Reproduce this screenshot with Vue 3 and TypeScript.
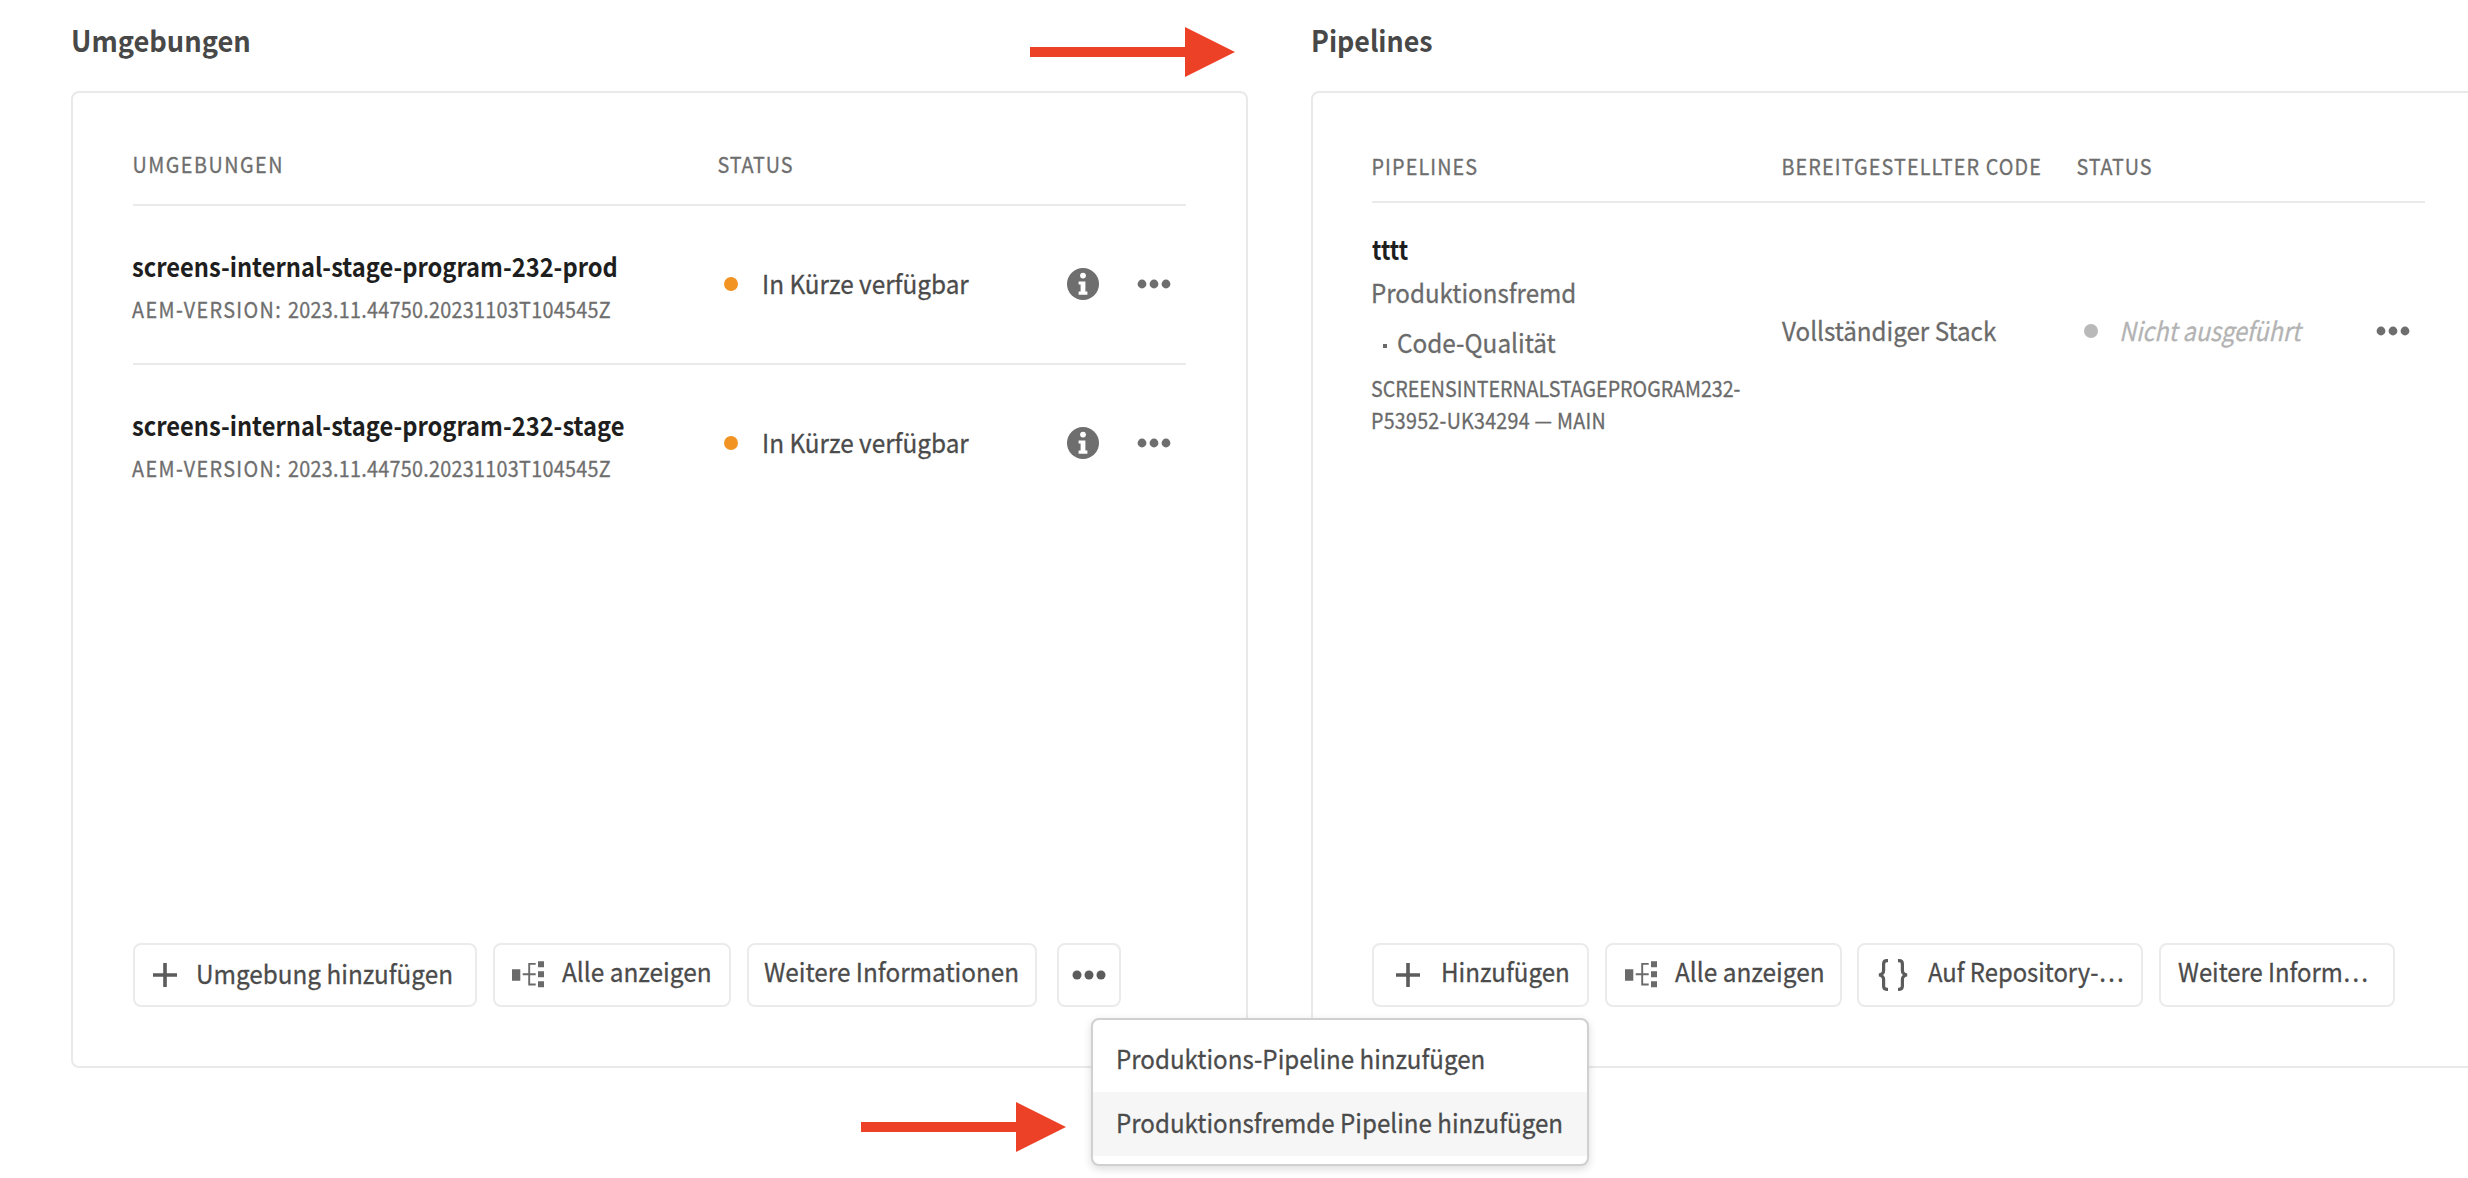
<script setup lang="ts">
import { ref } from 'vue'

interface Environment {
  name: string
  version: string
  status: string
}

const environments: Environment[] = [
  { name: 'screens-internal-stage-program-232-prod', version: '2023.11.44750.20231103T104545Z', status: 'In Kürze verfügbar' },
  { name: 'screens-internal-stage-program-232-stage', version: '2023.11.44750.20231103T104545Z', status: 'In Kürze verfügbar' },
]

const menuItems = ['Produktions-Pipeline hinzufügen', 'Produktionsfremde Pipeline hinzufügen']
const activeItem = ref(1)
</script>

<template>
  <main class="page">
    <div class="columns">
      <section class="column environments">
        <h2>Umgebungen</h2>
        <div class="card">
          <div class="table-head">
            <div class="col-name"><span class="caption wide">Umgebungen</span></div>
            <span class="caption tight">Status</span>
          </div>
          <div v-for="env in environments" :key="env.name" class="row">
            <div class="col-name env-name">
              <p class="name">{{ env.name }}</p>
              <p class="meta">AEM-Version: <span class="version">{{ env.version }}</span></p>
            </div>
            <div class="col-status">
              <i class="dot pending"></i>
              <span class="text">{{ env.status }}</span>
            </div>
            <svg class="info" width="32" height="32" viewBox="0 0 32 32">
              <circle cx="16" cy="16" r="16" fill="#6e6e6e" />
              <circle cx="16" cy="7.6" r="2.9" fill="#fff" />
              <path d="M11.6 13.4h6.8v10.2h2v3.2h-8.8v-3.2h2v-7h-2z" fill="#fff" />
            </svg>
            <svg class="more" width="34" height="10" viewBox="0 0 34 10" fill="#6e6e6e">
              <circle cx="5" cy="5" r="4.4" /><circle cx="17" cy="5" r="4.4" /><circle cx="29" cy="5" r="4.4" />
            </svg>
          </div>
          <footer class="actions">
            <button class="b-env">
              <svg width="24" height="24" viewBox="0 0 24 24"><path d="M12 0v24M0 12h24" stroke="#5c5c5c" stroke-width="3.6" /></svg>
              <span class="label low">Umgebung hinzufügen</span>
            </button>
            <button class="b-all">
              <svg width="32" height="27" viewBox="0 0 32 27">
                <path d="M0 8.3h8.3v11.4H0zM26 .2h6v6h-6zM26 10.2h6v6h-6zM26 20.3h6v6h-6z" fill="#6a6a6a" />
                <path d="M10.7 13.2h13M23.7 2.9h-6.5v20.6h6.5" fill="none" stroke="#6a6a6a" stroke-width="1.9" />
              </svg>
              <span class="label">Alle anzeigen</span>
            </button>
            <button class="b-more"><span class="label">Weitere Informationen</span></button>
            <button class="b-dots">
              <svg width="34" height="10" viewBox="0 0 34 10" fill="#5c5c5c">
                <circle cx="5" cy="5" r="4.5" /><circle cx="17" cy="5" r="4.5" /><circle cx="29" cy="5" r="4.5" />
              </svg>
            </button>
          </footer>
        </div>
      </section>

      <section class="column pipelines">
        <h2>Pipelines</h2>
        <div class="card">
          <div class="table-head">
            <div class="col-pipeline"><span class="caption">Pipelines</span></div>
            <div class="col-code"><span class="caption">Bereitgestellter Code</span></div>
            <span class="caption tight">Status</span>
          </div>
          <div class="pipeline-row">
            <div class="col-pipeline">
              <p class="name short">tttt</p>
              <p class="text soft kind">Produktionsfremd</p>
              <div class="sub"><i class="bullet"></i><span class="text soft">Code-Qualität</span></div>
              <p class="repo">SCREENSINTERNALSTAGEPROGRAM232-<br /><span class="branch">P53952-UK34294 — MAIN</span></p>
            </div>
            <div class="col-code"><span class="text soft">Vollständiger Stack</span></div>
            <div class="col-run">
              <i class="dot idle"></i>
              <span class="text never">Nicht ausgeführt</span>
            </div>
            <svg class="more" width="34" height="10" viewBox="0 0 34 10" fill="#6e6e6e">
              <circle cx="5" cy="5" r="4.4" /><circle cx="17" cy="5" r="4.4" /><circle cx="29" cy="5" r="4.4" />
            </svg>
          </div>
          <footer class="actions">
            <button class="p-add">
              <svg width="24" height="24" viewBox="0 0 24 24"><path d="M12 0v24M0 12h24" stroke="#5c5c5c" stroke-width="3.6" /></svg>
              <span class="label">Hinzufügen</span>
            </button>
            <button class="p-all">
              <svg width="32" height="27" viewBox="0 0 32 27">
                <path d="M0 8.3h8.3v11.4H0zM26 .2h6v6h-6zM26 10.2h6v6h-6zM26 20.3h6v6h-6z" fill="#6a6a6a" />
                <path d="M10.7 13.2h13M23.7 2.9h-6.5v20.6h6.5" fill="none" stroke="#6a6a6a" stroke-width="1.9" />
              </svg>
              <span class="label">Alle anzeigen</span>
            </button>
            <button class="p-repo">
              <svg width="30" height="32" viewBox="0 0 30 32" fill="none" stroke="#5c5c5c" stroke-width="3.2">
                <path d="M10 1.7H8.8Q5.6 1.7 5.6 5v6.6Q5.6 15.4 1 16q4.6 .6 4.6 4.4V27q0 3.3 3.2 3.3H10" />
                <path d="M20 1.7h1.2q3.2 0 3.2 3.3v6.6q0 3.8 4.6 4.4-4.6 .6-4.6 4.4V27q0 3.3-3.2 3.3H20" />
              </svg>
              <span class="label cut">Auf Repository-…</span>
            </button>
            <button class="p-more"><span class="label cut">Weitere Inform…</span></button>
          </footer>
        </div>
      </section>
    </div>

    <ul class="menu">
      <li v-for="(item, i) in menuItems" :key="item" :class="{ active: i === activeItem }" @mouseenter="activeItem = i">
        <span class="label">{{ item }}</span>
      </li>
    </ul>

    <svg class="arrow arrow-top" width="205" height="50" viewBox="0 0 205 50"><path d="M0 20h155V0l50 25-50 25V30H0z" fill="#ed4127" /></svg>
    <svg class="arrow arrow-bottom" width="205" height="50" viewBox="0 0 205 50"><path d="M0 20h155V0l50 25-50 25V30H0z" fill="#ed4127" /></svg>
  </main>
</template>

<style>
body {
  margin: 0;
  background: #fff;
}
</style>

<style scoped>
* {
  box-sizing: border-box;
}
.page {
  position: relative;
  width: 2468px;
  height: 1178px;
  overflow: hidden;
  background: #fff;
  font-family: 'Noto Sans CJK SC', 'Open Sans', sans-serif;
  font-size: 26px;
  color: #4b4b4b;
}
.page h2,
.page p,
.page ul {
  margin: 0;
  padding: 0;
}
.columns {
  display: flex;
  gap: 63px;
  padding: 20px 0 0 71px;
}
.column {
  flex: none;
}
.environments {
  width: 1177px;
}
.pipelines {
  width: 1240px;
}
/* The face is drawn slightly condensed throughout. */
h2,
.caption,
.meta,
.name,
.text,
.repo,
.label {
  display: inline-block;
  transform: translate(-1px, -1px) scaleX(var(--fit, 0.936));
  transform-origin: 0 50%;
  white-space: nowrap;
}
.text,
.label,
.caption,
.meta,
.repo {
  -webkit-text-stroke: 0.3px currentColor;
}
h2 {
  --fit: 0.94;
  display: block;
  transform: translateY(-1px) scaleX(var(--fit));
  font-size: 29px;
  font-weight: 700;
  line-height: 40px;
  color: #484848;
}
.pipelines h2 {
  --fit: 0.925;
}
.card {
  display: flex;
  flex-direction: column;
  height: 977px;
  margin-top: 31px;
  padding: 0 60px 59px;
  border: 2px solid #e9e9e9;
  border-radius: 8px;
}
.pipelines .card {
  padding: 0 0 59px 59px;
}
.table-head {
  display: flex;
  flex: none;
  height: 113px;
  padding-top: 56px;
  border-bottom: 2px solid #eaeaea;
}
.pipelines .table-head {
  width: 1053px;
  height: 110px;
  padding-top: 58px;
}
.caption,
.meta {
  --fit: 0.92;
  font-size: 21.5px;
  line-height: 30px;
  letter-spacing: 1.2px;
  text-transform: uppercase;
  color: #6e6e6e;
}
.table-head .caption {
  height: 30px;
  transform: translate(-0.5px, -0.5px) scaleX(var(--fit));
  vertical-align: top;
}
.table-head .wide {
  letter-spacing: 1.6px;
}
.table-head .tight {
  letter-spacing: 0.9px;
}
.page .meta {
  letter-spacing: 1.5px;
}
.version {
  letter-spacing: 0.3px;
}
.col-name {
  flex: none;
  width: 585px;
}
.row {
  display: flex;
  align-items: center;
  flex: none;
  height: 159px;
  padding-bottom: 2px;
  border-bottom: 2px solid #eaeaea;
}
.row:nth-child(3) {
  border-bottom-color: transparent;
}
.env-name {
  padding-top: 6px;
}
.name {
  --fit: 0.911;
  display: block;
  font-weight: 700;
  line-height: 38px;
  color: #1e1e1e;
}
.short {
  --fit: 0.86;
  transform: translate(0, 0) scaleX(var(--fit));
}
.page .env-name .meta {
  display: block;
  margin-top: 9px;
}
.col-status {
  display: flex;
  align-items: center;
  width: 349px;
}
.dot {
  flex: none;
  width: 14px;
  height: 14px;
  margin: 0 25px 0 6px;
  border-radius: 50%;
}
.pending {
  background: #f29423;
}
.idle {
  margin-left: 7px;
  margin-right: 22px;
  background: #b9b9b9;
}
.text {
  line-height: 38px;
}
.soft {
  color: #6a6a6a;
}
.col-code .text {
  transform: translate(0, -1.5px) scaleX(var(--fit, 0.93));
}
.never {
  --fit: 0.9;
  font-style: italic;
  color: #b3b3b3;
}
.info {
  flex: none;
  margin-right: 38px;
}
.more {
  flex: none;
}
.pipeline-row {
  display: flex;
  align-items: center;
  width: 1053px;
  padding-top: 27px;
}
.col-pipeline {
  flex: none;
  width: 410px;
}
.page .kind {
  --fit: 0.928;
  display: block;
  margin-top: 6px;
}
.sub {
  display: flex;
  align-items: center;
  margin-top: 12px;
  padding-left: 11px;
}
.bullet {
  width: 4px;
  height: 4px;
  margin: 6px 11px 0 0;
  background: #6a6a6a;
}
.page .repo {
  --fit: 0.913;
  display: block;
  margin-top: 11px;
  font-size: 21.5px;
  line-height: 31.5px;
  color: #6a6a6a;
}
.branch {
  letter-spacing: 0.3px;
}
.col-code {
  flex: none;
  width: 295px;
}
.col-run {
  display: flex;
  align-items: center;
  flex: none;
  width: 299px;
}
.pipeline-row .col-code,
.pipeline-row .col-run,
.pipeline-row .more {
  margin-bottom: 4px;
}
.actions {
  display: flex;
  height: 64px;
  margin-top: auto;
}
button {
  display: flex;
  align-items: center;
  flex: none;
  height: 64px;
  padding: 0;
  border: 2px solid #ebebeb;
  border-radius: 8px;
  background: #fff;
  font: inherit;
  color: inherit;
}
button svg {
  flex: none;
}
.label {
  --fit: 0.938;
  line-height: 36px;
  transform: translate(0, -2px) scaleX(var(--fit));
}
.cut {
  --fit: 0.916;
}
button .label {
  margin-top: -4px;
}
button .low {
  margin-top: 0;
}
.b-env { width: 344px; padding-left: 18px; gap: 19px; }
.b-env .label { --fit: 0.934; }
.b-all { width: 238px; margin-left: 16px; padding-left: 17px; gap: 18px; }
.b-more { width: 290px; margin-left: 16px; padding-left: 15px; }
.b-more .label { --fit: 0.935; }
.b-dots { width: 64px; margin-left: 20px; padding-left: 13px; }
.p-add { width: 217px; padding-left: 22px; gap: 21px; }
.p-add .label { --fit: 0.93; }
.p-all { width: 237px; margin-left: 16px; padding-left: 18px; gap: 18px; }
.p-repo { width: 286px; margin-left: 15px; padding-left: 19px; gap: 20px; }
.p-more { width: 236px; margin-left: 16px; padding-left: 17px; }
.b-all svg,
.p-all svg {
  margin-top: -2px;
}
.menu {
  position: absolute;
  left: 1091px;
  top: 1018px;
  width: 498px;
  height: 148px;
  border: 2px solid #d0d0d0;
  border-radius: 8px;
  background: #fff;
  box-shadow: 0 3px 8px rgba(0, 0, 0, 0.14);
  list-style: none;
}
.page .menu {
  padding-top: 8px;
}
.menu li {
  display: flex;
  align-items: center;
  height: 64px;
  padding-left: 23px;
}
.menu .label {
  --fit: 0.928;
}
.menu .active {
  background: #f6f6f6;
}
.arrow {
  position: absolute;
}
.arrow-top {
  left: 1030px;
  top: 27px;
}
.arrow-bottom {
  left: 861px;
  top: 1102px;
}
</style>
